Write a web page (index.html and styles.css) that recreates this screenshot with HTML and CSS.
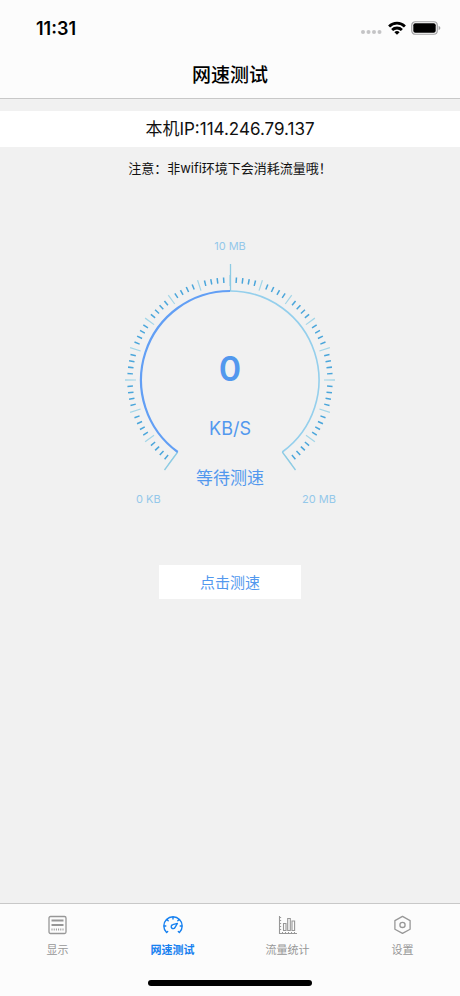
FILE: index.html
```html
<!DOCTYPE html>
<html lang="zh-CN">
<head>
<meta charset="utf-8">
<meta name="viewport" content="width=device-width, initial-scale=1">
<title>网速测试</title>
<link rel="stylesheet" href="styles.css">
</head>
<body>
<header class="header">
  <div class="status">
    <time class="clock">11:31</time>
    <div class="status-icons">
      <svg width="22" height="16" viewBox="0 0 22 16" fill="#c4c4c6" aria-hidden="true"><circle cx="2" cy="12" r="2"/><circle cx="7.500" cy="12" r="2"/><circle cx="13" cy="12" r="2"/><circle cx="18.500" cy="12" r="2"/></svg>
      <svg width="18" height="14" viewBox="0 0 18 14" fill="none" stroke="#000" stroke-width="2.800" aria-hidden="true"><path d="M1.100 5.400A11.400 11.400 0 0 1 16.900 5.400M4.100 9A7 7 0 0 1 13.900 9"/><path d="M9 13.800 6.400 11.300A3.700 3.700 0 0 1 11.600 11.300Z" fill="#000" stroke="none"/></svg>
      <svg width="30" height="14" viewBox="0 0 30 14" aria-hidden="true"><rect x=".75" y=".75" width="25.500" height="12.500" rx="3.500" fill="none" stroke="#a2a2a4" stroke-width="1.200"/><rect x="2.300" y="2.300" width="22.400" height="9.400" rx="2" fill="#000"/><path d="M27.600 4.800Q29.400 5.500 29.400 7T27.600 9.200Z" fill="#a2a2a4"/></svg>
    </div>
  </div>
  <h1 class="title">网速测试</h1>
</header>
<main class="main">
  <p class="ip">本机IP:114.246.79.137</p>
  <p class="note">注意：非wifi环境下会消耗流量哦！</p>
  <section class="gauge">
    <span class="scale">10 MB</span>
    <div class="dial">
      <svg class="dial-art" width="220" height="212" viewBox="-110 -120 220 212" fill="none" aria-hidden="true">
        <path d="M-58.800 80.900A100 100 0 1 1 58.800 80.900" pathLength="80" stroke="#4ba6db" stroke-width="5.500" stroke-dasharray="0 .88 .24 .76 .24 .76 .24 .76 .24 .88"/>
        <path d="M-58.500 80.500A99.500 99.500 0 1 1 58.500 80.500" pathLength="80" stroke="#a3d6e8" stroke-width="11" stroke-dasharray=".2 4.800" stroke-dashoffset=".1"/>
        <path d="M0-89A89 89 0 0 1 52.300 72" stroke="#94cfec" stroke-width="1.600"/>
        <path d="M.5-116V-89M-52.300 72-65.500 90M52.300 72 65.500 90" stroke="#8dcbe3" stroke-width="1.300"/>
        <path d="M-52.300 72A89 89 0 0 1 0-89" stroke="#629ff5" stroke-width="2.200"/>
      </svg>
      <div class="reading">
        <strong class="value">0</strong>
        <span class="unit">KB/S</span>
        <span class="state">等待测速</span>
      </div>
    </div>
    <div class="ends"><span class="scale">0 KB</span><span class="scale">20 MB</span></div>
  </section>
  <button class="start" type="button">点击测速</button>
</main>
<nav class="tabs">
  <div class="tab-row">
    <a class="tab" href="#display">
      <svg width="20" height="20" viewBox="0 0 20 20" fill="none" stroke="currentColor" aria-hidden="true"><rect x="1" y="1.500" width="17" height="17" rx="1.500" stroke-width="1.300"/><path d="M3.500 5.500H15.500M3.500 10H15.500" stroke-width="2"/><path d="M3.500 14.600H15.500" stroke-width="2" stroke-dasharray="1 1.200"/></svg>
      <span>显示</span>
    </a>
    <a class="tab active" href="#speed" aria-current="page">
      <svg width="20" height="20" viewBox="0 0 20 20" fill="none" stroke="currentColor" stroke-width="1.400" stroke-linecap="round" aria-hidden="true"><path d="M3.600 17.500A9.200 9.200 0 1 1 16.400 17.500M10 1.700V4M3.900 4.400 5.200 5.700M16.100 4.400 14.800 5.700M1.200 11H2.800M18.800 11H17.200M3.600 17.500 4.700 16.400M16.400 17.500 15.300 16.400"/><path d="M14.400 8.400 12.100 12.300A2 2 0 1 1 9.800 9.700Z" stroke-linejoin="round"/></svg>
      <span>网速测试</span>
    </a>
    <a class="tab" href="#stats">
      <svg width="20" height="20" viewBox="0 0 20 20" fill="none" stroke="currentColor" stroke-width="1.100" aria-hidden="true"><path d="M1.500 1V18.500H19"/><path d="M2.600 2V17" stroke-dasharray="1 2"/><path d="M4 17.500H18" stroke-dasharray="1 2"/><path d="M5.500 15.500V8.500H8V15.500ZM9.700 15.500V3.500H12.300V15.500ZM14 15.500V6H16.600V15.500Z"/></svg>
      <span>流量统计</span>
    </a>
    <a class="tab" href="#settings">
      <svg width="20" height="20" viewBox="0 0 20 20" fill="none" stroke="currentColor" stroke-width="1.300" stroke-linejoin="round" aria-hidden="true"><path d="M9.500 1.400 17.100 5.600V14.200L9.500 18.400 1.900 14.200V5.600Z"/><circle cx="9.500" cy="9.900" r="2.600"/></svg>
      <span>设置</span>
    </a>
  </div>
  <div class="home"></div>
</nav>
</body>
</html>
```

FILE: styles.css
```css
* {
  box-sizing: border-box;
}

body {
  margin: 0;
  min-height: 100vh;
  display: flex;
  flex-direction: column;
  background: #f1f1f1;
  color: #111;
  font-family: Inter, "Noto Sans CJK SC", sans-serif;
}

.header {
  background: #fcfcfc;
  border-bottom: 1px solid #c8c8c8;
}

.status {
  display: flex;
  align-items: center;
  justify-content: space-between;
  height: 56px;
  padding: 0 19px 0 36px;
}

.clock {
  font-size: 18px;
  font-weight: 600;
  color: #000;
}

.status-icons {
  display: flex;
  align-items: center;
  gap: 5px;
}

.title {
  margin: 0;
  padding: 2px 0 4px;
  font-size: 19px;
  font-weight: 500;
  line-height: 36px;
  text-align: center;
  color: #000;
}

.main {
  flex: 1;
  display: flex;
  flex-direction: column;
  align-items: center;
  padding-top: 12px;
}

.ip {
  align-self: stretch;
  margin: 0;
  background: #fff;
  font-size: 17px;
  line-height: 36px;
  text-align: center;
}

.note {
  margin: 0;
  padding-top: 12px;
  font-size: 13px;
  line-height: 18px;
}

.gauge {
  display: flex;
  flex-direction: column;
  align-items: center;
  padding-top: 60px;
}

.scale {
  font-size: 11px;
  line-height: 18px;
  color: #94c8ea;
}

.dial {
  display: grid;
  justify-items: center;
  padding-top: 5px;
}

.dial-art,
.reading {
  grid-area: 1 / 1;
}

.dial-art {
  display: block;
}

.reading {
  display: flex;
  flex-direction: column;
  align-items: center;
  padding-top: 88px;
  color: #5298ee;
}

.value {
  font-size: 34px;
  font-weight: 600;
  line-height: 42px;
}

.unit {
  padding: 24px 0;
  font-size: 18px;
  line-height: 30px;
}

.state {
  font-size: 17px;
  line-height: 20px;
}

.ends {
  align-self: stretch;
  display: flex;
  justify-content: space-between;
  padding: 2px 4px 0 16px;
}

.start {
  width: 142px;
  height: 34px;
  margin: 57px 0 24px;
  padding: 0 0 2px;
  border: 0;
  background: #fff;
  color: #5298ee;
  font: inherit;
  font-size: 15px;
}

.tabs {
  background: #fcfcfc;
  border-top: 1px solid #c8c8c8;
  padding-bottom: 10px;
}

.tab-row {
  display: grid;
  grid-template-columns: repeat(4, 1fr);
  padding: 11px 0 21px;
}

.tab {
  display: flex;
  flex-direction: column;
  align-items: center;
  gap: 7px;
  color: #979797;
  font-size: 11px;
  font-weight: 400;
  line-height: 17px;
  text-decoration: none;
}

.active {
  color: #1680f0;
  font-weight: 600;
}

.home {
  width: 164px;
  height: 6px;
  margin: 0 auto;
  border-radius: 3px;
  background: #000;
}
```
